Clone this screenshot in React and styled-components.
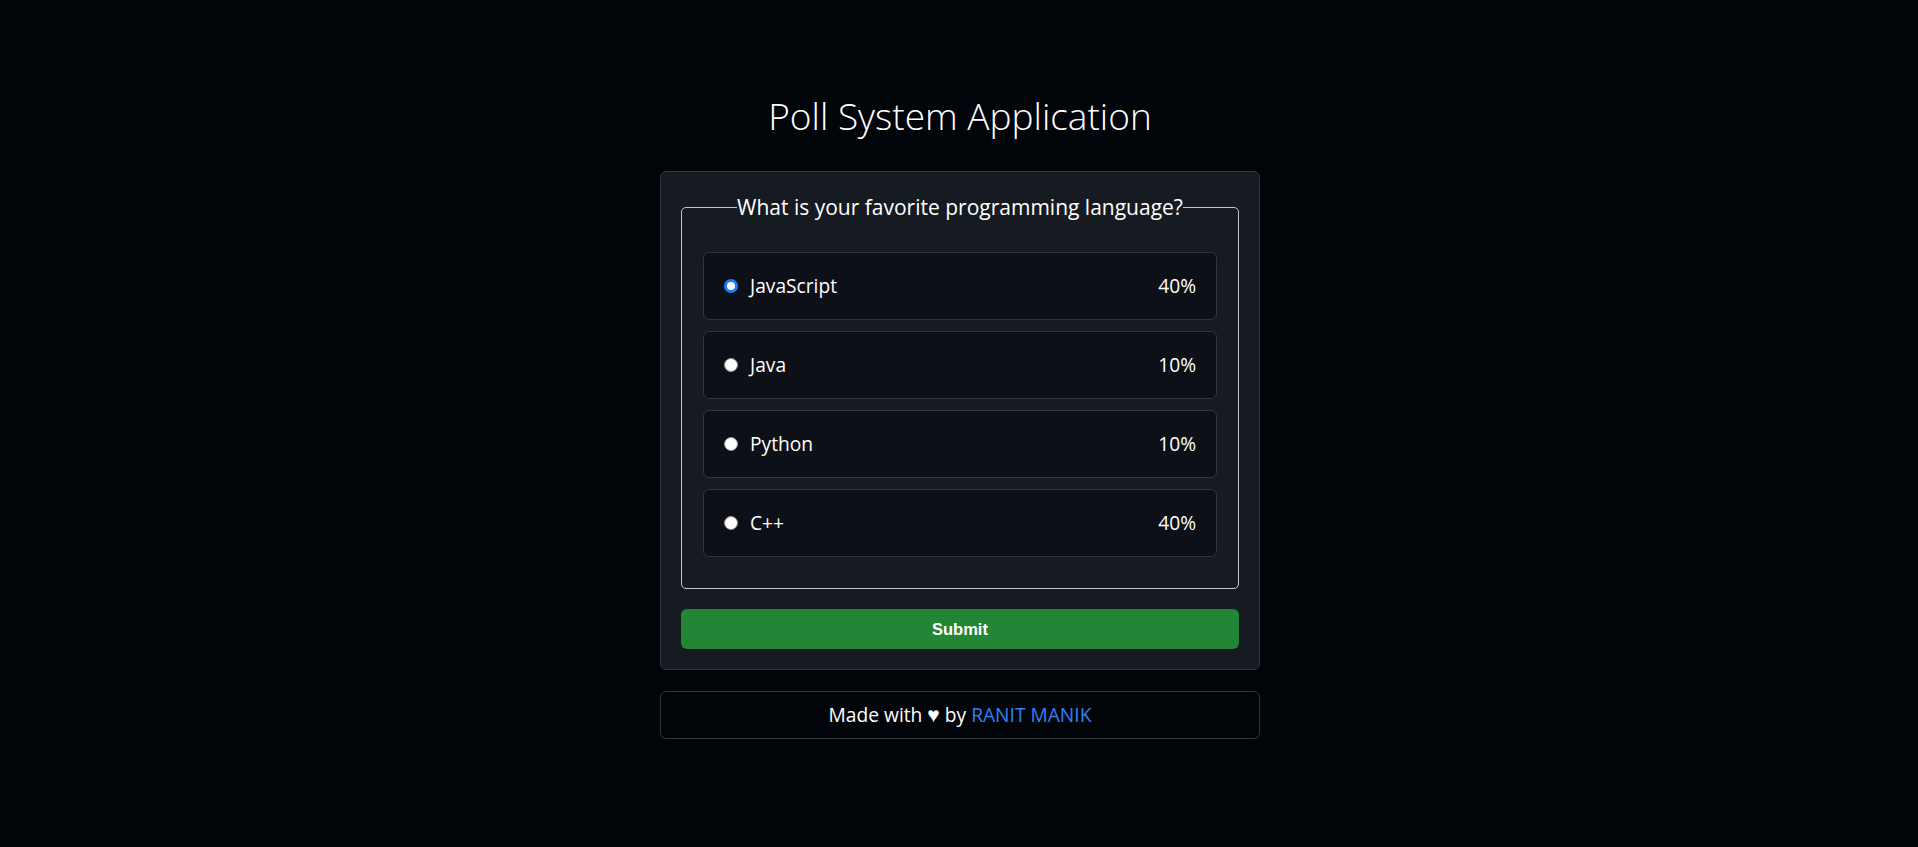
import React, { useState } from 'react';
import styled, { createGlobalStyle } from 'styled-components';

const options = [
  { name: 'JavaScript', percent: 40 },
  { name: 'Java', percent: 10 },
  { name: 'Python', percent: 10 },
  { name: 'C++', percent: 40 },
];

export default function App() {
  const [choice, setChoice] = useState('JavaScript');

  return (
    <>
      <GlobalStyle />
      <Page>
        <Title>Poll System Application</Title>

        <Card>
          <form onSubmit={(e) => e.preventDefault()}>
            <Fieldset>
              <Legend>What is your favorite programming language?</Legend>
              <OptionList>
                {options.map((opt) => (
                  <OptionRow key={opt.name}>
                    <Radio
                      type="radio"
                      name="language"
                      value={opt.name}
                      checked={choice === opt.name}
                      onChange={() => setChoice(opt.name)}
                    />
                    <OptionName>{opt.name}</OptionName>
                    <Percent>{opt.percent}%</Percent>
                  </OptionRow>
                ))}
              </OptionList>
            </Fieldset>
            <SubmitButton type="submit">Submit</SubmitButton>
          </form>
        </Card>

        <Footer>
          Made with <Heart>♥</Heart> by <AuthorLink href="#">RANIT MANIK</AuthorLink>
        </Footer>
      </Page>
    </>
  );
}

const GlobalStyle = createGlobalStyle`
  html, body {
    margin: 0;
    background: #010409;
    color: #f0f6fc;
    font-family: "Open Sans", "Noto Sans", sans-serif;
  }
`;

const Page = styled.main`
  display: flex;
  flex-direction: column;
  align-items: center;
  padding: 94px 0 0 2px;
  min-height: 100vh;
  box-sizing: border-box;
`;

const Title = styled.h1`
  margin: 0 0 33px;
  font-size: 37px;
  font-weight: 300;
  line-height: 44px;
  color: #ffffff;
`;

const Card = styled.section`
  width: 600px;
  box-sizing: border-box;
  padding: 20px;
  background: #161b22;
  border: 1px solid #30363d;
  border-radius: 6px;
`;

const Fieldset = styled.fieldset`
  margin: 0;
  min-width: 0;
  padding: 29px 21px 31px;
  border: 1px solid #c6c6c6;
  border-radius: 5px;
`;

const Legend = styled.legend`
  margin: 0 auto;
  padding: 0;
  font-size: 21px;
  line-height: 31px;
  color: #ffffff;
`;

const OptionList = styled.div`
  display: flex;
  flex-direction: column;
  gap: 11px;
`;

const OptionRow = styled.label`
  display: flex;
  align-items: center;
  height: 68px;
  box-sizing: border-box;
  padding: 0 20px;
  background: #0d1117;
  border: 1px solid #30363d;
  border-radius: 6px;
  cursor: pointer;
`;

const Radio = styled.input`
  appearance: none;
  flex: none;
  width: 14px;
  height: 14px;
  margin: -1px 12px 0 0;
  box-sizing: border-box;
  border-radius: 50%;
  background: #ffffff;
  border: 1px solid #8f8f8f;
  cursor: pointer;

  &:checked {
    border: 3px solid #1a7dff;
  }
`;

const OptionName = styled.span`
  flex: 1;
  font-size: 19.2px;
  line-height: 28.8px;
  color: #ffffff;
`;

const Percent = styled.span`
  font-size: 19.2px;
  line-height: 28.8px;
  color: #ffffff;
`;

const SubmitButton = styled.button`
  display: block;
  width: 100%;
  height: 40px;
  margin-top: 20px;
  border: 0;
  border-radius: 6px;
  background: #238636;
  color: #ffffff;
  font-family: "Liberation Sans", Arial, sans-serif;
  font-size: 16.5px;
  font-weight: 700;
  cursor: pointer;
`;

const Footer = styled.footer`
  width: 600px;
  height: 48px;
  margin-top: 21px;
  box-sizing: border-box;
  padding-top: 1px;
  border: 1px solid #30363d;
  border-radius: 6px;
  background: #010409;
  text-align: center;
  font-size: 19.2px;
  line-height: 44px;
  color: #ffffff;
`;

const Heart = styled.span`
  font-size: 21px;
  line-height: 0;
`;

const AuthorLink = styled.a`
  color: #2f81f7;
  text-decoration: none;
`;
